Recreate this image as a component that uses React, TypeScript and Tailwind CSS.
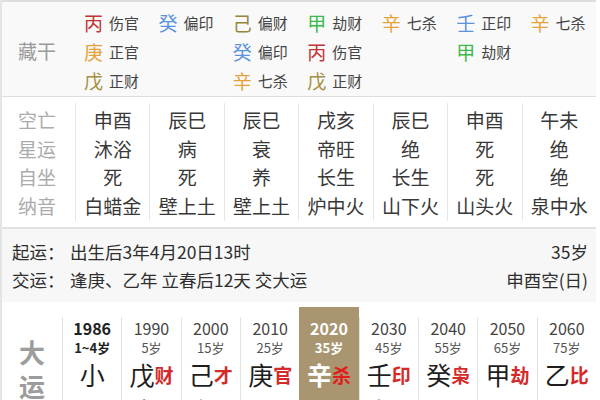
import React from 'react';

const FONT = { fontFamily: '"Noto Sans CJK SC", "Noto Sans", sans-serif' };

// 五行配色
const C: Record<string, string> = {
  甲: 'text-[#3cb94c]',
  乙: 'text-[#3cb94c]',
  丙: 'text-[#c23434]',
  丁: 'text-[#c23434]',
  戊: 'text-[#a3913f]',
  己: 'text-[#95843a]',
  庚: 'text-[#e6a23a]',
  辛: 'text-[#e6a23a]',
  壬: 'text-[#5c93dc]',
  癸: 'text-[#5c93dc]',
};

type Hid = [string, string];

const hidden: Hid[][] = [
  [['丙', '伤官'], ['庚', '正官'], ['戊', '正财']],
  [['癸', '偏印']],
  [['己', '偏财'], ['癸', '偏印'], ['辛', '七杀']],
  [['甲', '劫财'], ['丙', '伤官'], ['戊', '正财']],
  [['辛', '七杀']],
  [['壬', '正印'], ['甲', '劫财']],
  [['辛', '七杀']],
];

const info = [
  ['申酉', '沐浴', '死', '白蜡金'],
  ['辰巳', '病', '死', '壁上土'],
  ['辰巳', '衰', '养', '壁上土'],
  ['戌亥', '帝旺', '长生', '炉中火'],
  ['辰巳', '绝', '长生', '山下火'],
  ['申酉', '死', '死', '山头火'],
  ['午未', '绝', '绝', '泉中水'],
];

const infoLabels = ['空亡', '星运', '自坐', '纳音'];

const luck = [
  { year: '1986', age: '1~4岁', stem: '小', god: '', branch: '运', bgod: '', first: true },
  { year: '1990', age: '5岁', stem: '戊', god: '财', branch: '戌', bgod: '财' },
  { year: '2000', age: '15岁', stem: '己', god: '才', branch: '亥', bgod: '印' },
  { year: '2010', age: '25岁', stem: '庚', god: '官', branch: '子', bgod: '官' },
  { year: '2020', age: '35岁', stem: '辛', god: '杀', branch: '丑', bgod: '才', active: true },
  { year: '2030', age: '45岁', stem: '壬', god: '印', branch: '寅', bgod: '劫' },
  { year: '2040', age: '55岁', stem: '癸', god: '枭', branch: '卯', bgod: '比' },
  { year: '2050', age: '65岁', stem: '甲', god: '劫', branch: '辰', bgod: '财' },
  { year: '2060', age: '75岁', stem: '乙', god: '比', branch: '巳', bgod: '伤' },
];

export default function App() {
  return (
    <div style={FONT} className="w-[600px] h-[400px] overflow-hidden bg-white">
      <div className="w-[596px] border-l-2 border-r border-[#e4e4e4]">
        {/* 藏干 */}
        <div className="border-t-2 border-b border-[#dedede] bg-[#f9f9f9] pt-[6px] pb-[1px] grid grid-cols-[73px_repeat(7,1fr)] w-[594px]">
          <div className="flex items-center pl-[16px] text-[19px] text-[#9a9a9a]">藏干</div>
          {hidden.map((col, i) => (
            <div key={i} className="flex flex-col pl-[9px]">
              {[0, 1, 2].map((r) => (
                <div key={r} className="h-[29px] flex items-center gap-[6px]">
                  {col[r] && (
                    <>
                      <span className={`text-[19px] leading-none ${C[col[r][0]]}`}>{col[r][0]}</span>
                      <span className="text-[15px] leading-none text-[#444]">{col[r][1]}</span>
                    </>
                  )}
                </div>
              ))}
            </div>
          ))}
        </div>

        {/* 空亡 星运 自坐 纳音 */}
        <div className="border-b-2 border-[#e2e2e2] bg-white pt-[6px] pb-[6px] grid grid-cols-[73px_repeat(7,1fr)] w-[594px]">
          <div className="flex flex-col pt-[3px] pl-[16px]">
            {infoLabels.map((l) => (
              <div key={l} className="h-[28.5px] flex items-center text-[19px] text-[#ababab]">{l}</div>
            ))}
          </div>
          {info.map((col, i) => (
            <div key={i} className="flex flex-col pt-[3px] pb-[1px] border-l border-[#e6e6e6]">
              {col.map((t, r) => (
                <div key={r} className="h-[28.5px] flex items-center justify-center text-[19px] text-[#383838] whitespace-nowrap">{t}</div>
              ))}
            </div>
          ))}
        </div>

        {/* 起运 交运 */}
        <div className="bg-[#f7f7f7] pt-[9px] pb-[8px] pl-[10px] pr-[8px] text-[17.5px] text-[#2e2e2e] w-[594px]">
          <div className="h-[28px] flex items-center">
            <span className="w-[58px]">起运：</span>
            <span>出生后3年4月20日13时</span>
            <span className="ml-auto">35岁</span>
          </div>
          <div className="h-[28px] flex items-center">
            <span className="w-[58px]">交运：</span>
            <span>逢庚、乙年 立春后12天 交大运</span>
            <span className="ml-auto">申酉空(日)</span>
          </div>
        </div>

        {/* 大运 */}
        <div className="bg-white pt-[5px] grid grid-cols-[60px_repeat(9,1fr)] w-[594px]">
          <div className="flex flex-col items-center pt-[28px] text-[26px] font-bold leading-[34px] text-[#9c9c9c]">
            <span>大</span>
            <span>运</span>
          </div>
          {luck.map((d) =>
            d.active ? (
              <div key={d.year} className="bg-[#a99570] flex flex-col items-center pt-[10px] text-white">
                <div className="h-[22px] flex items-center text-[16px] font-bold">{d.year}</div>
                <div className="h-[18px] flex items-center text-[13px] font-bold">{d.age}</div>
                <div className="h-[36px] flex items-center">
                  <span className="text-[25px] font-bold">{d.stem}</span>
                  <span className="text-[19px] font-bold text-[#e01e1e]">{d.god}</span>
                </div>
                <div className="h-[36px] flex items-center">
                  <span className="text-[25px] font-bold">{d.branch}</span>
                  <span className="text-[19px] font-bold text-[#e01e1e]">{d.bgod}</span>
                </div>
              </div>
            ) : (
              <div key={d.year} className="mt-[10px] border-l border-[#e3e3e3] flex flex-col items-center">
                <div className={`h-[22px] flex items-center text-[16px] ${d.first ? 'font-bold text-[#222]' : 'text-[#444]'}`}>{d.year}</div>
                <div className={`h-[18px] flex items-center text-[13px] ${d.first ? 'font-bold text-[#222]' : 'text-[#555]'}`}>{d.age}</div>
                <div className="h-[36px] flex items-center">
                  <span className="text-[25px] text-[#1e1e1e]">{d.stem}</span>
                  {d.god && <span className="text-[19px] font-bold text-[#d42a2a]">{d.god}</span>}
                </div>
                <div className="h-[36px] flex items-center">
                  <span className="text-[25px] text-[#1e1e1e]">{d.branch}</span>
                  {d.bgod && <span className="text-[19px] font-bold text-[#d42a2a]">{d.bgod}</span>}
                </div>
              </div>
            )
          )}
        </div>
      </div>
    </div>
  );
}
